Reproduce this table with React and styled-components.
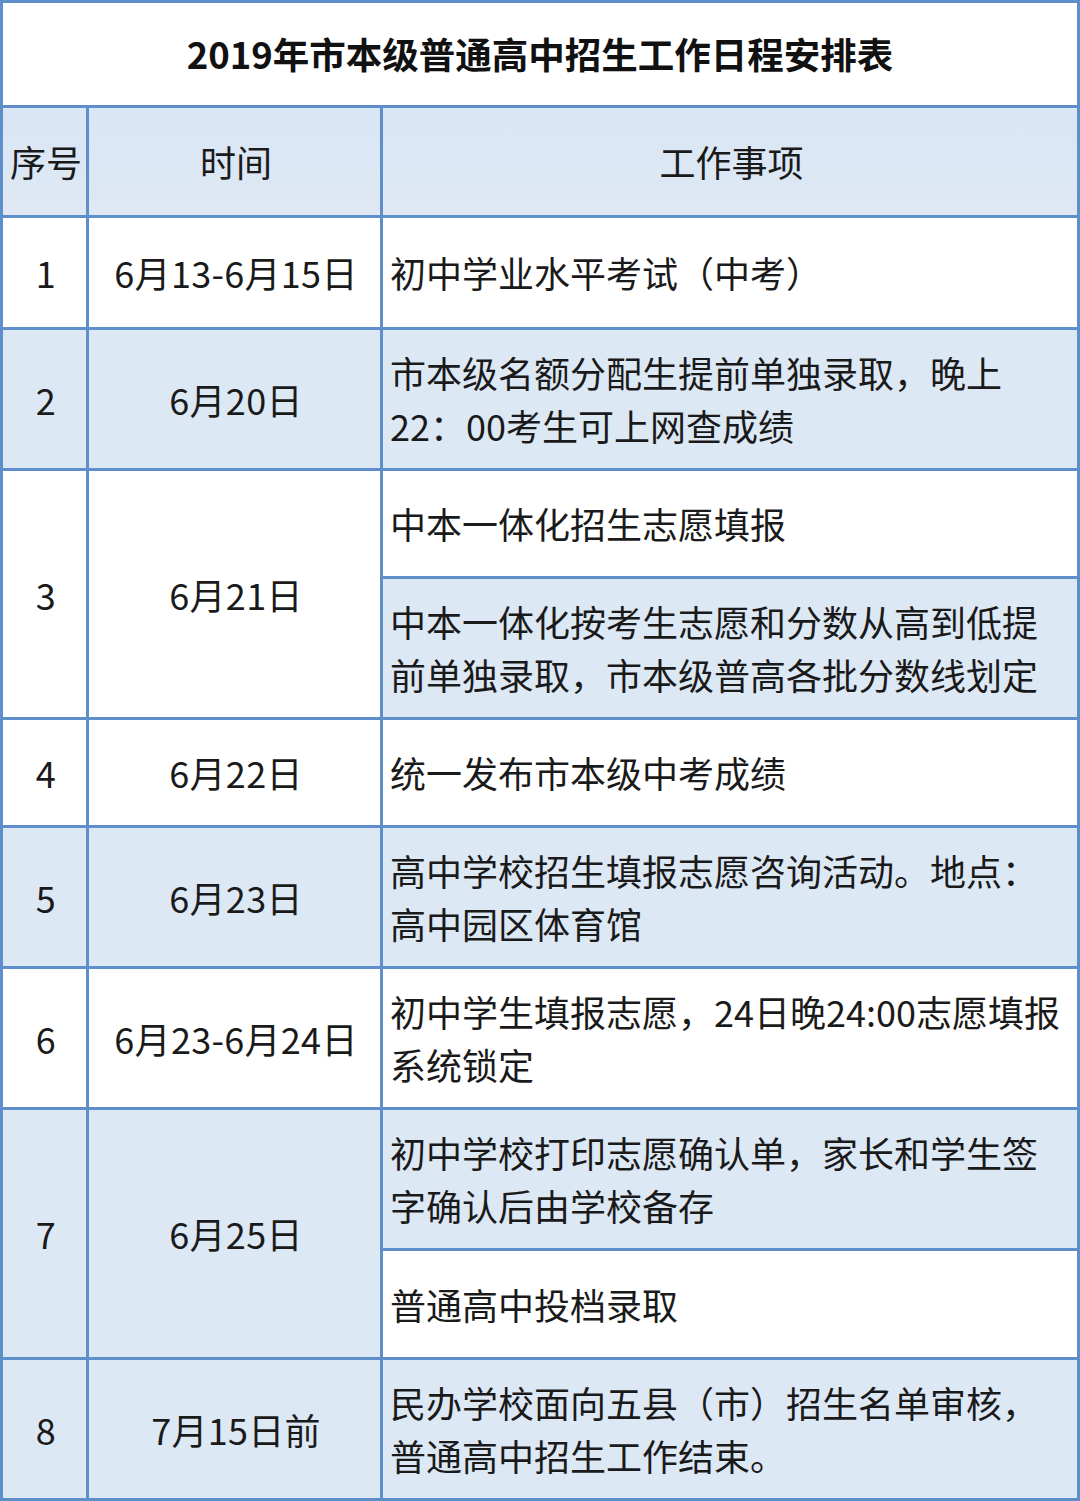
import styled, { createGlobalStyle } from 'styled-components';

const GlobalStyle = createGlobalStyle`
  html, body {
    margin: 0;
    padding: 0;
    background: #ffffff;
  }
  body {
    font-family: "Noto Sans CJK SC", "Noto Sans", sans-serif;
    color: #1a1a1a;
  }
`;

const BORDER = '#5e8fca';
const LIGHT = '#dde8f5';

// logical row heights, lines are the 3px grid gaps
const rowHeights = [102, 107, 109, 138, 105, 138, 105, 138, 138, 138, 106, 138];

const Table = styled.div`
  display: grid;
  grid-template-columns: 83px 291px 694px;
  grid-template-rows: ${rowHeights.map((h) => `${h}px`).join(' ')};
  gap: 3px;
  padding: 3px;
  width: 1080px;
  box-sizing: border-box;
  background: ${BORDER};
`;

const Title = styled.div`
  grid-column: 1 / span 3;
  background: #ffffff;
  display: flex;
  align-items: center;
  justify-content: center;
  font-size: 36.5px;
  font-weight: 700;
  color: #111111;
  padding-bottom: 2px;
`;

const Cell = styled.div`
  grid-row: span ${(p) => p.$span || 1};
  background: ${(p) => (p.$light ? LIGHT : '#ffffff')};
  display: flex;
  flex-direction: column;
  align-items: ${(p) => (p.$left ? 'flex-start' : 'center')};
  justify-content: center;
  padding: ${(p) => (p.$left ? '0 0 0 7px' : '0 0 0 3px')};
  font-size: 36px;
  line-height: 53px;
  white-space: nowrap;
  letter-spacing: ${(p) => (p.$left ? '0' : '0.3px')};
`;

const HeadCell = styled(Cell)`
  background: linear-gradient(#d8e6f5, #dfe8f4);
  letter-spacing: 0;
`;

const rows = [
  { no: '1', date: '6月13-6月15日', items: [['初中学业水平考试（中考）']] },
  { no: '2', date: '6月20日', items: [['市本级名额分配生提前单独录取，晚上', '22：00考生可上网查成绩']] },
  {
    no: '3',
    date: '6月21日',
    items: [
      ['中本一体化招生志愿填报'],
      ['中本一体化按考生志愿和分数从高到低提', '前单独录取，市本级普高各批分数线划定'],
    ],
  },
  { no: '4', date: '6月22日', items: [['统一发布市本级中考成绩']] },
  { no: '5', date: '6月23日', items: [['高中学校招生填报志愿咨询活动。地点：', '高中园区体育馆']] },
  { no: '6', date: '6月23-6月24日', items: [['初中学生填报志愿，24日晚24:00志愿填报', '系统锁定']] },
  {
    no: '7',
    date: '6月25日',
    items: [['初中学校打印志愿确认单，家长和学生签', '字确认后由学校备存'], ['普通高中投档录取']],
  },
  { no: '8', date: '7月15日前', items: [['民办学校面向五县（市）招生名单审核，', '普通高中招生工作结束。']] },
];

export default function App() {
  // alternate shading over the logical (sub)rows, header is row 0
  let index = 1;

  return (
    <>
      <GlobalStyle />
      <Table>
        <Title>2019年市本级普通高中招生工作日程安排表</Title>
        <HeadCell $light>序号</HeadCell>
        <HeadCell $light>时间</HeadCell>
        <HeadCell $light>工作事项</HeadCell>
        {rows.map((row) => {
          const start = index;
          index += row.items.length;
          const light = start % 2 === 0;
          return [
            <Cell key={row.no + 'n'} $span={row.items.length} $light={light}>
              {row.no}
            </Cell>,
            <Cell key={row.no + 'd'} $span={row.items.length} $light={light}>
              {row.date}
            </Cell>,
            ...row.items.map((lines, i) => (
              <Cell key={row.no + 'i' + i} $left $light={(start + i) % 2 === 0}>
                {lines.map((line) => (
                  <span key={line}>{line}</span>
                ))}
              </Cell>
            )),
          ];
        })}
      </Table>
    </>
  );
}
